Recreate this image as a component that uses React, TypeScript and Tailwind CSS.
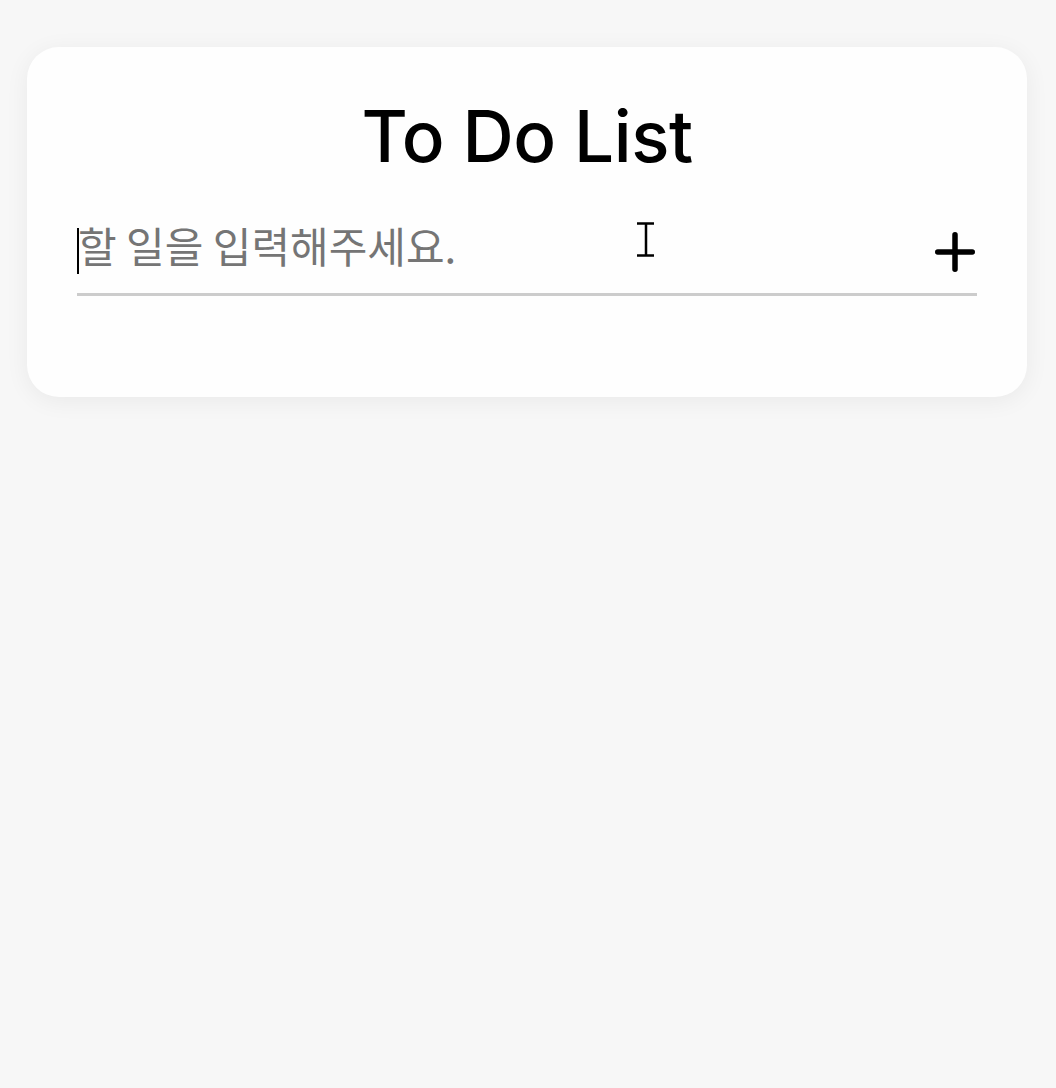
import React from "react";

export default function App() {
  return (
    <div className="min-h-[1088px] w-full bg-[#f7f7f7] pt-[47px] relative" style={{ fontFamily: "Inter, 'Noto Sans CJK KR', sans-serif" }}>
      <div className="ml-[27px] w-[1000px] rounded-[32px] bg-[#fefefe] shadow-[0_4px_24px_rgba(0,0,0,0.06)] px-[50px] pt-[54px] pb-[101px]">
        <h1 className="text-center text-[71px] leading-none font-medium text-black tracking-[-0.5px]">To Do List</h1>
        <div className="mt-[50px] flex items-start h-[74px] border-b-[3px] border-[#cccccc]">
          <div className="relative flex-1 h-full">
            <span className="absolute left-0 top-[6px] w-[2px] h-[46px] bg-black" />
            <span className="block pl-[1px] pt-[2px] text-[42px] leading-none text-[#757575]" style={{ fontFamily: "'Noto Sans CJK KR', sans-serif" }}>할 일을 입력해주세요.</span>
          </div>
          <button className="mt-[10px] mr-[2px] w-[40px] h-[40px] flex items-center justify-center">
            <svg width="40" height="40" viewBox="0 0 40 40" fill="none" stroke="black" strokeWidth="5.5" strokeLinecap="round">
              <path d="M20 2.75v34.5M2.75 20h34.5" />
            </svg>
          </button>
        </div>
      </div>
      <svg className="absolute left-[637px] top-[222px]" width="18" height="35" viewBox="0 0 18 35" fill="none" stroke="black" strokeWidth="2.5">
        <path d="M0 1.5h17M0 33.5h17M9 1.5v32" />
      </svg>
    </div>
  );
}
